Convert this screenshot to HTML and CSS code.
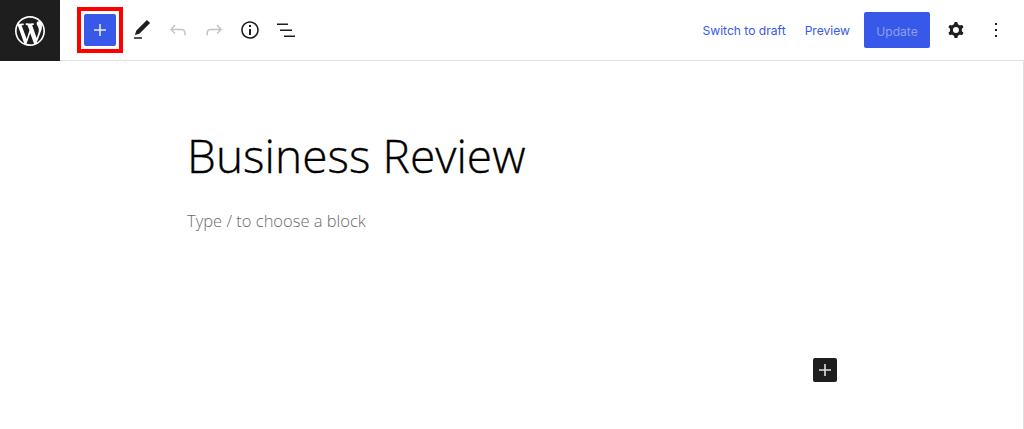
FILE: index.html
```html
<!DOCTYPE html>
<html lang="en">
<head>
<meta charset="utf-8">
<title>Business Review</title>
<link rel="stylesheet" href="styles.css">
</head>
<body>
<header class="topbar">
  <a class="logo" href="#"><svg viewBox="0 0 20 20" width="30" height="30"><path fill="#fff" d="M20 10c0-5.51-4.49-10-10-10C4.48 0 0 4.49 0 10c0 5.52 4.48 10 10 10 5.51 0 10-4.48 10-10zM7.78 15.37L4.37 6.22c.55-.02 1.17-.08 1.17-.08.5-.06.44-1.13-.06-1.11 0 0-1.45.11-2.37.11-.18 0-.37 0-.58-.01C4.12 2.69 6.87 1.11 10 1.11c2.33 0 4.45.87 6.05 2.34-.68-.11-1.65.39-1.65 1.58 0 .74.45 1.36.9 2.1.35.61.55 1.36.55 2.46 0 1.49-1.4 5-1.4 5l-3.03-8.37c.54-.02.82-.17.82-.17.5-.05.44-1.25-.06-1.22 0 0-1.44.12-2.38.12-.87 0-2.33-.12-2.33-.12-.5-.03-.56 1.2-.06 1.22l.92.08 1.26 3.41zM17.41 10c.24-.64.74-1.87.43-4.25.7 1.29 1.05 2.71 1.05 4.25 0 3.29-1.73 6.24-4.4 7.78.97-2.59 1.94-5.2 2.92-7.78zM6.1 18.09C3.12 16.65 1.11 13.53 1.11 10c0-1.3.23-2.48.72-3.59C3.25 10.3 4.67 14.2 6.1 18.09zm4.03-6.63l2.58 6.98c-.86.29-1.76.45-2.71.45-.79 0-1.57-.11-2.29-.33.81-2.38 1.62-4.74 2.42-7.1z"/></svg></a>
  <div class="tools">
    <span class="highlight"><button class="add"><svg viewBox="0 0 24 24" width="24" height="24"><path fill="#e8ebfc" d="M18 11.2h-5.2V6h-1.6v5.2H6v1.6h5.2V18h1.6v-5.2H18z"/></svg></button></span>
    <button class="tool"><svg viewBox="0 0 24 24" width="24" height="24"><path d="M20.1 5.1L16.9 2 6.2 12.7l-1.3 4.4 4.5-1.3L20.1 5.1zM4 20.8h8v-1.5H4v1.5z"/></svg></button>
    <button class="tool off"><svg viewBox="0 0 24 24" width="24" height="24"><path d="M18.3 11.7c-.6-.6-1.4-.9-2.3-.9H6.7l2.9-3.3-1.1-1-4.5 5L8.5 16l1-1-2.7-2.7H16c.5 0 .9.2 1.3.5 1 1 1 3.4 1 4.5v.3h1.5v-.2c0-1.5 0-4.3-1.5-5.7z"/></svg></button>
    <button class="tool off"><svg viewBox="0 0 24 24" width="24" height="24"><path d="M15.6 6.5l-1.1 1 2.9 3.3H8c-.9 0-1.7.3-2.3.9-1.4 1.5-1.4 4.2-1.4 5.6v.2h1.5v-.3c0-1.1 0-3.5 1-4.5.3-.3.7-.5 1.3-.5h9.2L14.5 15l1.1 1.1 4.6-4.6-4.6-5z"/></svg></button>
    <button class="tool"><svg viewBox="0 0 24 24" width="24" height="24"><path d="M12 3.2c-4.8 0-8.8 3.9-8.8 8.8 0 4.8 3.9 8.8 8.8 8.8 4.8 0 8.8-3.9 8.8-8.8 0-4.8-4-8.8-8.8-8.8zm0 16c-4 0-7.2-3.3-7.2-7.2C4.8 8 8 4.8 12 4.8s7.2 3.3 7.2 7.2c0 4-3.2 7.2-7.2 7.2zM11 17h2v-6h-2v6zm0-8h2V7h-2v2z"/></svg></button>
    <button class="tool"><svg viewBox="0 0 24 24" width="24" height="24"><path d="M3 5.5h11V7H3zM6 11.5h12V13H6zM10 17.5h11V19H10z"/></svg></button>
  </div>
  <div class="actions">
    <a class="link draft" href="#">Switch to draft</a>
    <a class="link preview" href="#">Preview</a>
    <button class="update">Update</button>
    <button class="tool cog"><svg viewBox="0 0 24 24" width="24" height="24"><path fill-rule="evenodd" d="M10.289 4.836A1 1 0 0111.275 4h1.306a1 1 0 01.987.836l.244 1.466c.787.26 1.503.679 2.108 1.218l1.393-.522a1 1 0 011.216.437l.653 1.13a1 1 0 01-.23 1.273l-1.148.944a6.025 6.025 0 010 2.435l1.149.946a1 1 0 01.23 1.272l-.653 1.13a1 1 0 01-1.216.437l-1.394-.522c-.605.54-1.32.958-2.108 1.218l-.244 1.466a1 1 0 01-.987.836h-1.306a1 1 0 01-.986-.836l-.244-1.466a5.995 5.995 0 01-2.108-1.218l-1.394.522a1 1 0 01-1.217-.436l-.653-1.131a1 1 0 01.23-1.272l1.149-.946a6.026 6.026 0 010-2.435l-1.148-.944a1 1 0 01-.23-1.272l.653-1.131a1 1 0 011.217-.437l1.393.522a5.994 5.994 0 012.108-1.218l.244-1.466zM14.929 12a3 3 0 11-6 0 3 3 0 016 0z"/></svg></button>
    <button class="tool more"><svg viewBox="0 0 24 24" width="24" height="24"><path d="M13 19h-2v-2h2v2zm0-6h-2v-2h2v2zm0-6h-2V5h2v2z"/></svg></button>
  </div>
</header>
<main class="editor">
  <h1 class="title">Business Review</h1>
  <p class="placeholder">Type / to choose a block</p>
  <button class="inserter"><svg viewBox="0 0 24 24" width="24" height="24"><path fill="#e0e0e0" d="M18 11.2h-5.2V6h-1.6v5.2H6v1.6h5.2V18h1.6v-5.2H18z"/></svg></button>
</main>
</body>
</html>
```
FILE: styles.css
```css
html, body { margin: 0; padding: 0; }
body { width: 1024px; height: 429px; overflow: hidden; background: #fff; font-family: "Inter", sans-serif; position: relative; }
button { border: 0; background: none; padding: 0; display: flex; align-items: center; justify-content: center; font-family: inherit; }
svg { display: block; }
.topbar { display: flex; align-items: center; height: 60px; border-bottom: 1px solid #e0e0e0; }
.logo { width: 60px; height: 60px; padding-top: 1px; margin-bottom: -1px; align-self: flex-start; background: #1e1e1e; display: flex; align-items: center; justify-content: center; flex: none; }
.tools { display: flex; align-items: center; margin-left: 17px; }
.highlight { border: 4px solid #f00; padding: 3px; display: block; margin-right: 1px; }
.add { width: 32px; height: 32px; background: #3858e9; border-radius: 2px; }
.tool { width: 36px; height: 36px; color: #1e1e1e; }
.tool svg { fill: currentColor; }
.off { color: #c4c4c4; }
.actions { margin-left: auto; display: flex; align-items: center; }
.link { font-size: 12.1px; line-height: 16px; padding-top: 2px; color: #3858e9; text-decoration: none; }
.draft { margin-right: 19px; }
.preview { margin-right: 14px; }
.update { width: 66px; height: 36px; padding-top: 2px; background: #3858e9; color: #8d9df0; font-size: 12.1px; border-radius: 2px; margin-right: 8px; }
.cog { width: 36px; margin-right: 4px; }
.more { width: 36px; margin-right: 10px; }
.editor { position: relative; height: 368px; padding-left: 187px; border-right: 1px solid #e0e0e0; box-sizing: border-box; }
.title { margin: 0; padding-top: 60px; font-family: "Open Sans", sans-serif; font-weight: 300; font-size: 46px; letter-spacing: 0.05px; -webkit-text-stroke: 0.35px #000; line-height: 68px; color: #000; }
.placeholder { margin: 0; padding-top: 18px; font-family: "Open Sans", sans-serif; font-weight: 300; font-size: 16.5px; line-height: 28px; color: #6a6a6a; }
.inserter { position: absolute; left: 813px; top: 297px; width: 24px; height: 24px; background: #1e1e1e; border-radius: 2px; }
```
